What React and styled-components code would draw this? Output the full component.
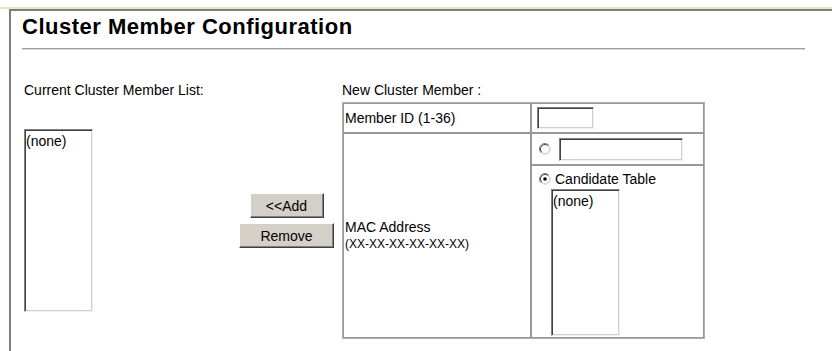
import styled, { createGlobalStyle } from 'styled-components';

const GlobalStyle = createGlobalStyle`
  * {
    box-sizing: border-box;
  }
  body {
    margin: 0;
    background: #ffffff;
    font-family: "Liberation Sans", Arial, sans-serif;
    font-size: 14px;
    color: #000000;
  }
`;

const Radio = ({ checked }) => (
  <RadioBox>
    <svg width="12" height="12" viewBox="0 0 12 12">
      <circle cx="6" cy="6" r="5.5" fill="#ffffff" />
      <path d="M2.1 9.9 A5.5 5.5 0 0 1 9.9 2.1" stroke="#808080" fill="none" />
      <path d="M9.9 2.1 A5.5 5.5 0 0 1 2.1 9.9" stroke="#e4e2dc" fill="none" />
      <path d="M2.8 9.2 A4.5 4.5 0 0 1 9.2 2.8" stroke="#404040" fill="none" />
      <path d="M9.2 2.8 A4.5 4.5 0 0 1 2.8 9.2" stroke="#d4d0c8" fill="none" />
      {checked && <circle cx="6" cy="6" r="1.8" fill="#000000" />}
    </svg>
  </RadioBox>
);

const App = () => {
  return (
    <Page>
      <GlobalStyle />
      <TopRule />
      <Frame>
        <Title>Cluster Member Configuration</Title>
        <Rule />
        <Form>
          <Label>Current Cluster Member List:</Label>
          <div />
          <Label $ml={8}>New Cluster Member :</Label>

          <ListBox $w={69} $h={183}>(none)</ListBox>
          <ButtonStack>
            <Button $w={74}>&lt;&lt;Add</Button>
            <Button $w={95}>Remove</Button>
          </ButtonStack>
          <MemberTable>
            <tbody>
              <tr>
                <NameCell $h={30}>Member ID (1-36)</NameCell>
                <ValueCell $h={30}>
                  <TextBox $w={57} $h={22} />
                </ValueCell>
              </tr>
              <tr>
                <NameCell rowSpan={2}>
                  <MacLine>MAC Address</MacLine>
                  <MacHint>(XX-XX-XX-XX-XX-XX)</MacHint>
                </NameCell>
                <ValueCell $h={32}>
                  <RadioRow>
                    <Radio />
                    <TextBox $w={124} $h={23} $ml={6} />
                  </RadioRow>
                </ValueCell>
              </tr>
              <tr>
                <ValueCell $h={173} $top>
                  <RadioRow>
                    <Radio checked />
                    <RadioText>Candidate Table</RadioText>
                  </RadioRow>
                  <ListBox $w={69} $h={147} $ml={14} $mt={2}>(none)</ListBox>
                </ValueCell>
              </tr>
            </tbody>
          </MemberTable>
        </Form>
      </Frame>
    </Page>
  );
};

export default App;

const Page = styled.div`
  width: 832px;
  height: 351px;
  overflow: hidden;
  background: #ffffff;
  padding-top: 7px;
`;

const TopRule = styled.div`
  height: 2px;
  background: #e4e9c2;
`;

const Frame = styled.div`
  margin-left: 9px;
  height: 342px;
  border-top: 2px solid #7c7c7c;
  border-left: 2px solid #7c7c7c;
  padding-left: 11px;
`;

const Title = styled.h1`
  margin: 3px 0 0;
  font-size: 22px;
  line-height: 25px;
  font-weight: bold;
  letter-spacing: 0.5px;
`;

const Rule = styled.div`
  width: 783px;
  margin-top: 9px;
  border-top: 1px solid #9c9c9c;
  border-bottom: 1px solid #d8d8d8;
`;

const Form = styled.div`
  margin-top: 32px;
  padding-left: 2px;
  display: grid;
  grid-template-columns: 215px 95px auto;
  row-gap: 4px;
  align-items: center;
`;

const Label = styled.div`
  margin-left: ${(p) => p.$ml || 0}px;
  line-height: 16px;
  white-space: nowrap;
`;

const ListBox = styled.div`
  width: ${(p) => p.$w}px;
  height: ${(p) => p.$h}px;
  margin-left: ${(p) => p.$ml || 0}px;
  margin-top: ${(p) => p.$mt || 0}px;
  padding: 3px 1px;
  line-height: 16px;
  background: #ffffff;
  border-top: 1px solid #808080;
  border-left: 1px solid #808080;
  border-right: 1px solid #f0f0f0;
  border-bottom: 1px solid #f0f0f0;
  box-shadow: inset 1px 1px 0 #404040, inset -1px -1px 0 #d4d0c8;
`;

const ButtonStack = styled.div`
  display: flex;
  flex-direction: column;
  align-items: center;
  gap: 5px;
`;

const Button = styled.button`
  width: ${(p) => p.$w}px;
  height: 25px;
  padding: 0;
  font-family: "Liberation Sans", Arial, sans-serif;
  font-size: 14px;
  color: #000000;
  background: #d4d0c8;
  border-top: 1px solid #ffffff;
  border-left: 1px solid #ffffff;
  border-right: 1px solid #404040;
  border-bottom: 1px solid #404040;
  box-shadow: inset -1px -1px 0 #808080;
  cursor: pointer;
`;

const MemberTable = styled.table`
  width: 363px;
  margin-left: 8px;
  border-collapse: separate;
  border-spacing: 0;
  border: 1px solid #b0b0b0;
`;

const NameCell = styled.td`
  width: 188px;
  height: ${(p) => (p.$h ? `${p.$h}px` : 'auto')};
  padding: 0 0 0 1px;
  border: 1px solid #989898;
  vertical-align: middle;
  line-height: 16px;
`;

const ValueCell = styled.td`
  width: 173px;
  height: ${(p) => p.$h}px;
  padding: ${(p) => (p.$top ? '5px 0 0 5px' : '0 0 0 5px')};
  border: 1px solid #989898;
  vertical-align: ${(p) => (p.$top ? 'top' : 'middle')};
  line-height: 16px;
`;

const TextBox = styled.div`
  width: ${(p) => p.$w}px;
  height: ${(p) => p.$h}px;
  margin-left: ${(p) => p.$ml || 0}px;
  background: #ffffff;
  border-top: 1px solid #808080;
  border-left: 1px solid #808080;
  border-right: 1px solid #f0f0f0;
  border-bottom: 1px solid #f0f0f0;
  box-shadow: inset 1px 1px 0 #404040, inset -1px -1px 0 #d4d0c8;
`;

const RadioRow = styled.div`
  display: flex;
  align-items: center;
`;

const RadioBox = styled.span`
  display: inline-flex;
  width: 12px;
  height: 12px;
  margin: 0 2px;
`;

const RadioText = styled.span`
  margin-left: 2px;
  line-height: 16px;
`;

const MacLine = styled.div`
  font-size: 14px;
  line-height: 17px;
`;

const MacHint = styled.div`
  font-size: 12px;
  line-height: 17px;
`;
